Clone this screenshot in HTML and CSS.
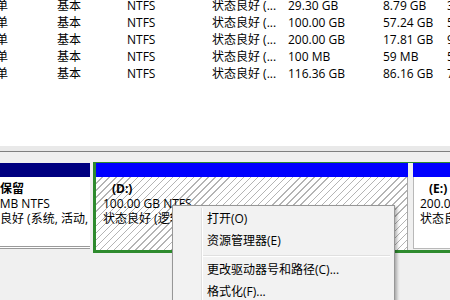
FILE: index.html
```html
<!DOCTYPE html>
<html lang="zh-CN">
<head>
    <meta charset="UTF-8">
    <title>磁盘管理</title>
    <link rel="stylesheet" href="styles.css">
</head>
<body>
    <!-- volume list (top pane) -->
    <div class="volumes">
        <div class="vol-list">
            <div class="vol-row"><span>简单</span><span>基本</span><span>NTFS</span><span>状态良好 (...</span><span>29.30 GB</span><span>8.79 GB</span><span>30 %</span></div>
            <div class="vol-row"><span>简单</span><span>基本</span><span>NTFS</span><span>状态良好 (...</span><span>100.00 GB</span><span>57.24 GB</span><span>57 %</span></div>
            <div class="vol-row"><span>简单</span><span>基本</span><span>NTFS</span><span>状态良好 (...</span><span>200.00 GB</span><span>17.81 GB</span><span>9 %</span></div>
            <div class="vol-row"><span>简单</span><span>基本</span><span>NTFS</span><span>状态良好 (...</span><span>100 MB</span><span>59 MB</span><span>59 %</span></div>
            <div class="vol-row"><span>简单</span><span>基本</span><span>NTFS</span><span>状态良好 (...</span><span>116.36 GB</span><span>86.16 GB</span><span>74 %</span></div>
        </div>
    </div>

    <div class="splitter"></div>

    <!-- graphical disk view -->
    <div class="disk-pane">
        <div class="disk-row">
            <div class="part part-sys">
                <div class="part-head"></div>
                <div class="part-body">
                    <div class="part-name">系统保留</div>
                    <div>100 MB NTFS</div>
                    <div>状态良好 (系统, 活动, 主分区)</div>
                </div>
            </div>
            <div class="extended">
                <div class="part part-d">
                    <div class="part-head"></div>
                    <div class="part-body hatched">
                        <div class="part-name indent">(D:)</div>
                        <div>100.00 GB NTFS</div>
                        <div>状态良好 (逻辑驱动器)</div>
                    </div>
                </div>
                <div class="part part-e">
                    <div class="part-head"></div>
                    <div class="part-body">
                        <div class="part-name indent">(E:)</div>
                        <div>200.00 GB NTFS</div>
                        <div>状态良好 (逻辑驱动器)</div>
                    </div>
                </div>
            </div>
        </div>
    </div>

    <!-- right-click menu -->
    <div class="menu">
        <div class="menu-item">打开(O)</div>
        <div class="menu-item">资源管理器(E)</div>
        <div class="menu-sep"></div>
        <div class="menu-item">更改驱动器号和路径(C)...</div>
        <div class="menu-item">格式化(F)...</div>
    </div>
</body>
</html>
```

FILE: styles.css
```css
* {
    box-sizing: border-box;
}

body {
    margin: 0;
    width: 450px;
    height: 300px;
    overflow: hidden;
    position: relative;
    background: #f0f0f0;
    font-family: "Open Sans", "Noto Sans CJK SC", sans-serif;
    font-size: 12px;
    color: #000;
}

.volumes {
    height: 146px;
    background: #fff;
    overflow: hidden;
}

.vol-list {
    margin: -3px 0 0 -16px;
}

.vol-row {
    display: grid;
    grid-template-columns: 73px 70px 85px 76px 95px 64px 60px;
    height: 17px;
    line-height: 17px;
    white-space: nowrap;
}

.splitter {
    height: 6px;
    background: #e9e9e9;
    border-bottom: 1px solid #808080;
}

.disk-pane {
    padding-top: 10px;
}

.disk-row {
    display: flex;
    align-items: flex-start;
    margin-left: -30px;
}

.part-head {
    height: 14px;
    background: #0000ff;
}

.part-body {
    height: 73px;
    padding: 4px 7px;
    background: #fff;
    line-height: 15px;
    white-space: nowrap;
    overflow: hidden;
}

.part-name {
    font-weight: bold;
}

.indent {
    padding-left: 9px;
}

.part-sys {
    width: 120px;
    margin: 1px 3px 0 0;
}

.part-sys .part-head {
    background: #000080;
}

.part-sys .part-body {
    height: 72px;
    padding-left: 6px;
    border-bottom: 3px double #9a9a9a;
}

.extended {
    flex: 1;
    display: flex;
    border: 3px solid #2e8b2e;
    border-top-width: 1px;
    border-right: none;
}

.part-d {
    width: 312px;
    margin-right: 5px;
}

.hatched {
    background: repeating-linear-gradient(135deg, #fff 0 4px, #b4b4b4 4px 5px);
    border-right: 1px solid #a8a8a8;
}

.part-e {
    flex: 1;
}

.part-e .part-body {
    height: 72px;
    padding-left: 6px;
    border: 1px solid #b8b8b8;
    border-top: none;
}

.menu {
    position: absolute;
    left: 172px;
    top: 205px;
    width: 223px;
    height: 110px;
    padding: 2px;
    background: #f2f2f2;
    border: 1px solid #979797;
    box-shadow: 2px 2px 3px rgba(0, 0, 0, 0.3);
}

.menu::before {
    content: '';
    position: absolute;
    left: 28px;
    top: 2px;
    bottom: 2px;
    width: 1px;
    background: #e0e0e0;
    border-right: 1px solid #fff;
}

.menu-item {
    height: 22px;
    line-height: 22px;
    padding-left: 32px;
    white-space: nowrap;
}

.menu-sep {
    height: 2px;
    margin: 3px 2px 2px 28px;
    border-top: 1px solid #e0e0e0;
    border-bottom: 1px solid #fff;
}
```
